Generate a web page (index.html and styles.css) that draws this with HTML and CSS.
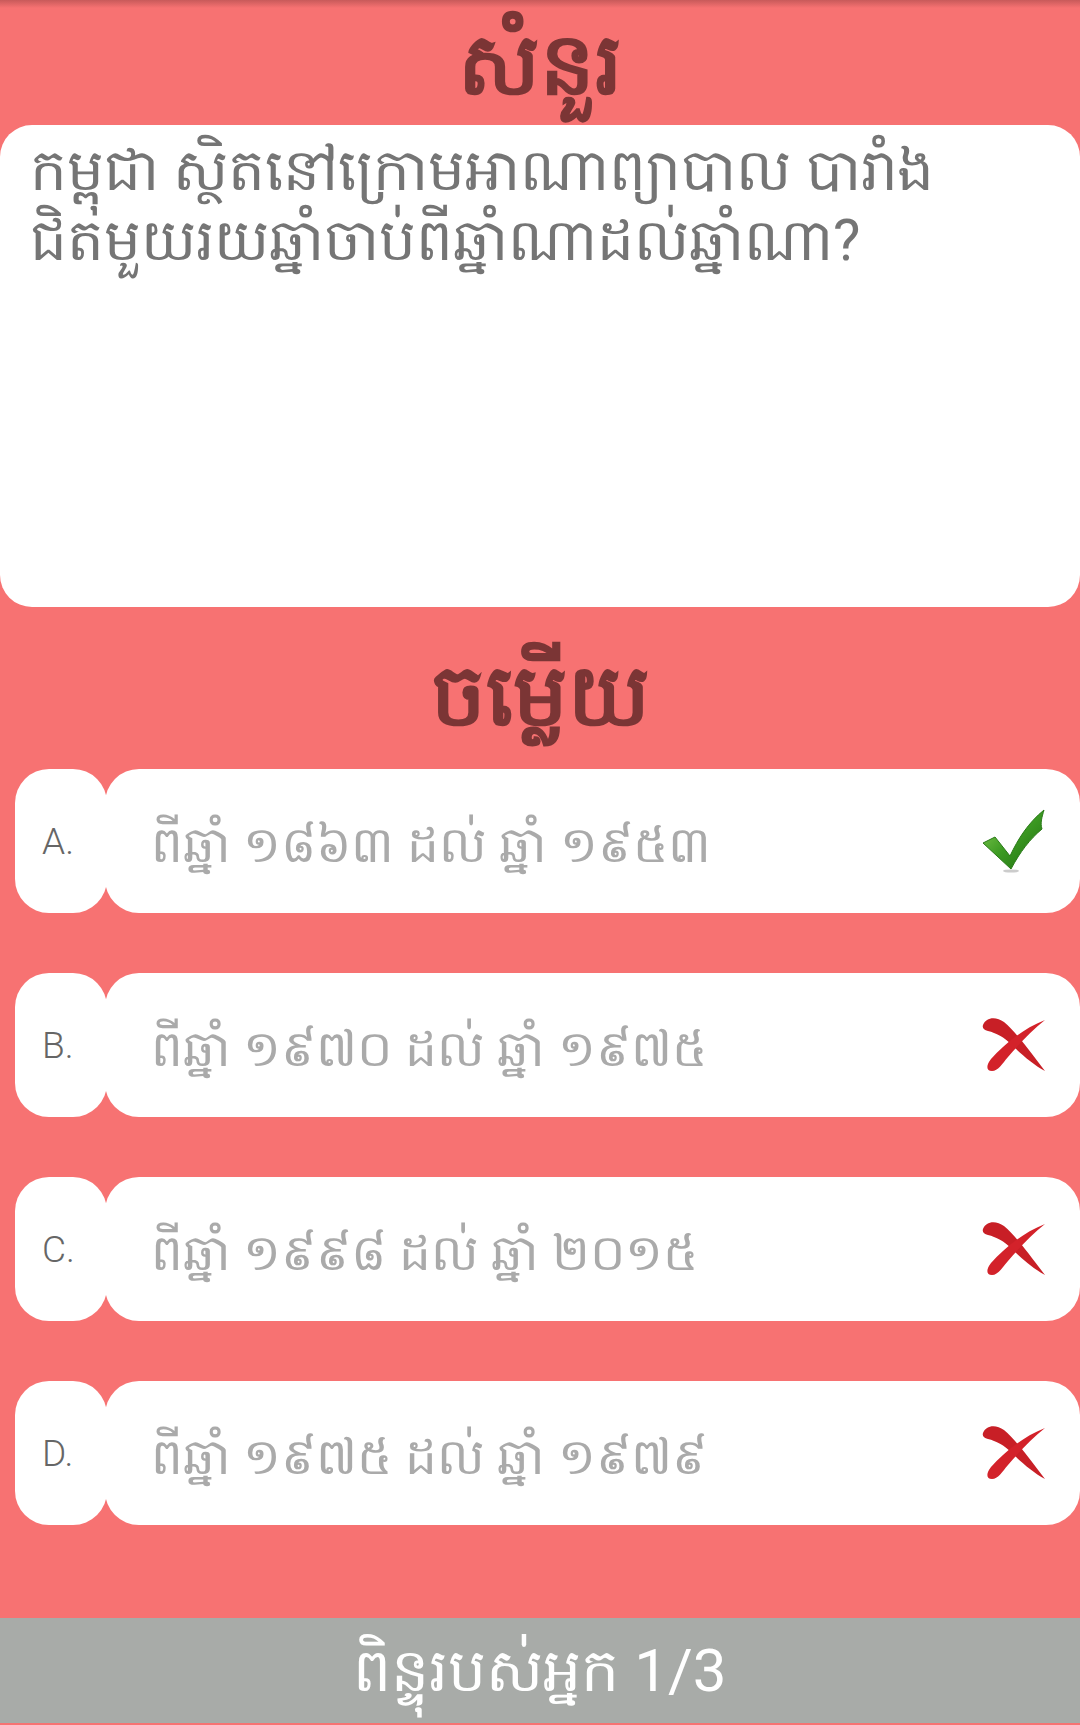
FILE: index.html
```html
<!DOCTYPE html>
<html lang="km">
<head>
<meta charset="utf-8">
<link rel="stylesheet" href="styles.css">
</head>
<body>
<div class="screen">
  <div class="shadow"></div>
  <h1 class="title">សំនួរ</h1>
  <div class="question">កម្ពុជា ស្ថិតនៅក្រោមអាណាព្យាបាល បារាំង ជិតមួយរយឆ្នាំចាប់ពីឆ្នាំណាដល់ឆ្នាំណា?</div>
  <h2 class="title answers-title">ចម្លើយ</h2>
  <div class="answers">
    <div class="row">
      <div class="label">A.</div>
      <div class="box"><span class="text">ពីឆ្នាំ ១៨៦៣ ដល់ ឆ្នាំ ១៩៥៣</span>
        <svg class="icon" viewBox="0 0 64 64"><defs><linearGradient id="g" x1="0" y1="0" x2="1" y2="1"><stop offset="0" stop-color="#8fd35a"/><stop offset="0.5" stop-color="#3c9a22"/><stop offset="1" stop-color="#1d6a10"/></linearGradient></defs><ellipse cx="29" cy="62" rx="8" ry="1.6" fill="#999" opacity=".5"/><path d="M1 34 L13 28 L28 47 C36 30 46 14 62 1 C60 8 58 14 60 20 C48 30 38 43 29 60 Z" fill="url(#g)" stroke="#2a7a18" stroke-width="1"/></svg>
      </div>
    </div>
    <div class="row">
      <div class="label">B.</div>
      <div class="box"><span class="text">ពីឆ្នាំ ១៩៧០ ដល់ ឆ្នាំ ១៩៧៥</span>
        <svg class="icon" viewBox="0 0 64 64"><g class="x"><path d="M1 12 C4 4 14 3 22 9 C34 19 46 36 63 58 C52 52 40 42 30 32 C22 24 14 20 6 18 C2 17 0 15 1 12 Z" fill="#c81f26"/><path d="M63 7 C50 17 38 30 26 44 C20 51 16 58 10 58 C4 58 4 52 9 46 C22 32 40 16 63 7 Z" fill="#d3222a"/></g></svg>
      </div>
    </div>
    <div class="row">
      <div class="label">C.</div>
      <div class="box"><span class="text">ពីឆ្នាំ ១៩៩៨ ដល់ ឆ្នាំ ២០១៥</span>
        <svg class="icon" viewBox="0 0 64 64"><g class="x"><path d="M1 12 C4 4 14 3 22 9 C34 19 46 36 63 58 C52 52 40 42 30 32 C22 24 14 20 6 18 C2 17 0 15 1 12 Z" fill="#c81f26"/><path d="M63 7 C50 17 38 30 26 44 C20 51 16 58 10 58 C4 58 4 52 9 46 C22 32 40 16 63 7 Z" fill="#d3222a"/></g></svg>
      </div>
    </div>
    <div class="row">
      <div class="label">D.</div>
      <div class="box"><span class="text">ពីឆ្នាំ ១៩៧៥ ដល់ ឆ្នាំ ១៩៧៩</span>
        <svg class="icon" viewBox="0 0 64 64"><g class="x"><path d="M1 12 C4 4 14 3 22 9 C34 19 46 36 63 58 C52 52 40 42 30 32 C22 24 14 20 6 18 C2 17 0 15 1 12 Z" fill="#c81f26"/><path d="M63 7 C50 17 38 30 26 44 C20 51 16 58 10 58 C4 58 4 52 9 46 C22 32 40 16 63 7 Z" fill="#d3222a"/></g></svg>
      </div>
    </div>
  </div>
  <div class="footer">ពិន្ទុរបស់អ្នក 1/3</div>
</div>
</body>
</html>
```
FILE: styles.css
```css
* { box-sizing: border-box; margin: 0; padding: 0; }
html, body { width: 1080px; height: 1725px; overflow: hidden; }
body {
  background: #f77272;
  font-family: Roboto, "Noto Sans", "DejaVu Sans", sans-serif;
}
.screen {
  position: relative;
  width: 1080px;
  height: 1725px;
  display: flex;
  flex-direction: column;
}
.shadow {
  position: absolute;
  left: 0; top: 0; right: 0;
  height: 8px;
  background: linear-gradient(#c85a5a, rgba(247,114,114,0));
}
.title {
  font-weight: bold;
  color: #7b3535;
  text-align: center;
  font-size: 86px;
  line-height: 130px;
  height: 125px;
}
.question {
  height: 482px;
  background: #fff;
  border-radius: 32px;
  padding: 10px 60px 10px 30px;
  color: #757575;
  font-size: 58px;
  line-height: 70px;
}
.answers-title {
  height: 162px;
  line-height: 178px;
}
.answers {
  display: flex;
  flex-direction: column;
  gap: 60px;
  padding-left: 15px;
}
.row {
  display: flex;
  height: 144px;
}
.label {
  width: 92px;
  background: #fff;
  border-radius: 34px;
  color: #666;
  font-size: 37px;
  font-weight: 300;
  display: flex;
  align-items: center;
  padding-left: 27px;
}
.box {
  flex: 1;
  margin-left: -2px;
  background: #fff;
  border-radius: 34px;
  display: flex;
  align-items: center;
  padding-left: 46px;
  padding-right: 34px;
}
.text {
  flex: 1;
  color: #aaaaaa;
  font-size: 50px;
  padding-top: 16px;
}
.icon { width: 64px; height: 64px; }
.footer {
  margin-top: auto;
  margin-bottom: 2px;
  height: 105px;
  background: #a8aba8;
  color: #fff;
  text-align: center;
  font-size: 60px;
  line-height: 105px;
}
```
